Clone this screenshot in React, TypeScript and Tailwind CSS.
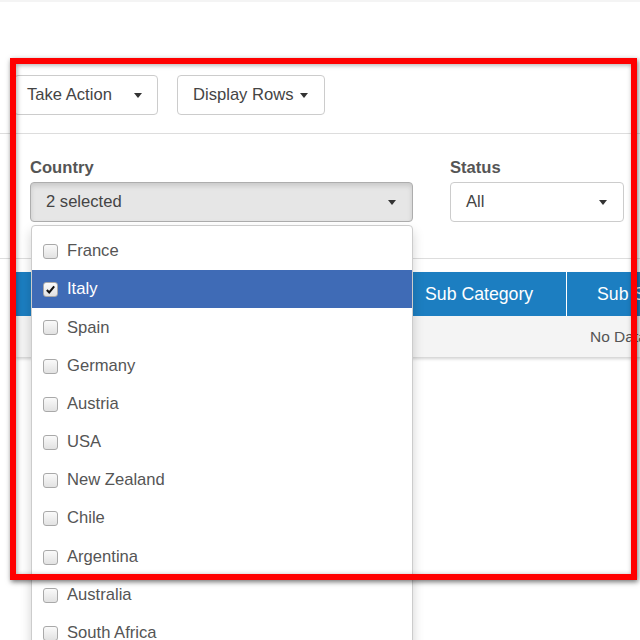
const countries = [
  "France",
  "Italy",
  "Spain",
  "Germany",
  "Austria",
  "USA",
  "New Zealand",
  "Chile",
  "Argentina",
  "Australia",
  "South Africa",
];

function Caret({ color = "border-t-[#333]" }: { color?: string }) {
  return (
    <span
      className={`inline-block w-0 h-0 border-t-[5px] border-x-[4.5px] border-x-transparent ${color}`}
    />
  );
}

function Checkbox({ checked }: { checked?: boolean }) {
  return (
    <span className="flex items-center justify-center w-[15px] h-[15px] rounded-[3px] border border-[#a9a9a9] bg-gradient-to-b from-[#fafafa] to-[#e2e2e2]">
      {checked && (
        <svg viewBox="0 0 12 12" className="w-[11px] h-[11px]">
          <path d="M2 6.5 L4.6 9.2 L10 2.6" fill="none" stroke="#111" strokeWidth="2.2" />
        </svg>
      )}
    </span>
  );
}

export default function App() {
  return (
    <div
      className="relative w-[640px] h-[640px] overflow-hidden bg-white text-[#555]"
      style={{ fontFamily: '"Liberation Sans", Arial, sans-serif' }}
    >
      <div className="h-[2px] bg-[#f4f4f4]" />

      {/* Toolbar */}
      <div className="flex gap-[19px] pl-[14px] pt-[73px] pb-[18px] border-b border-[#ddd]">
        <button className="flex items-center w-[144px] h-[40px] pl-[12px] pr-[15px] justify-between border border-[#ccc] rounded-[4px] bg-white text-[16.6px] text-[#444]">
          <span>Take Action</span>
          <Caret />
        </button>
        <button className="flex items-center gap-[6px] w-[148px] h-[40px] pl-[15px] border border-[#ccc] rounded-[4px] bg-white text-[16.6px] text-[#444]">
          <span>Display Rows</span>
          <Caret />
        </button>
      </div>

      {/* Filters */}
      <div className="flex gap-[37px] pl-[30px] pt-[24px] pb-[36px] border-b border-[#ddd]">
        <div className="flex flex-col w-[383px]">
          <label className="text-[16.6px] leading-[20px] font-bold mb-[4px] text-[#555]">Country</label>
          <div className="flex items-center justify-between h-[40px] pl-[15px] pr-[16px] border border-[#adadad] rounded-[4px] bg-[#e6e6e6] shadow-[inset_0_3px_5px_rgba(0,0,0,0.125)] text-[16.6px] text-[#444]">
            <span>2 selected</span>
            <Caret />
          </div>
        </div>
        <div className="flex flex-col w-[174px]">
          <label className="text-[16.6px] leading-[20px] font-bold mb-[4px] text-[#555]">Status</label>
          <div className="flex items-center justify-between h-[40px] pl-[15px] pr-[16px] border border-[#ccc] rounded-[4px] bg-white text-[16.6px] text-[#444]">
            <span>All</span>
            <Caret />
          </div>
        </div>
      </div>

      {/* Table */}
      <div className="ml-[16px] mt-[13px] w-[700px] shadow-[0_2px_3px_rgba(0,0,0,0.18)]">
        <div className="flex h-[44px] bg-[#1c7ec1] text-white text-[17.7px]">
          <div className="w-[44px] border-r border-white flex items-center justify-center">
            <span className="w-[14px] h-[14px] rounded-[3px] bg-[#ddd]" />
          </div>
          <div className="w-[350px] border-r border-white" />
          <div className="w-[157px] border-r border-white flex items-center pl-[15px] pt-[1px]">Sub Category</div>
          <div className="flex-1 flex items-center pl-[30px] pt-[1px]">Sub Status</div>
        </div>
        <div className="flex items-center h-[41px] bg-[#f4f4f4] text-[15.5px] text-[#555] pl-[574px]">
          No Data Available
        </div>
      </div>

      {/* Dropdown menu */}
      <div className="absolute left-[31px] top-[225px] w-[382px] pt-[6px] bg-white border border-[#ccc] rounded-[4px] shadow-[0_6px_12px_rgba(0,0,0,0.175)]">
        {countries.map((c) => {
          const active = c === "Italy";
          return (
            <div
              key={c}
              className={`flex items-center gap-[9px] h-[38.2px] pl-[11px] pt-[1px] text-[16.6px] ${
                active ? "bg-[#3f6bb6] text-white" : "text-[#555]"
              }`}
            >
              <Checkbox checked={active} />
              <span>{c}</span>
            </div>
          );
        })}
      </div>

      {/* Highlight frame */}
      <div className="absolute left-[10px] top-[58px] w-[627px] h-[522px] border-[6px] border-[#ff0000] shadow-[1px_2px_5px_rgba(0,0,0,0.55),inset_1px_1px_5px_rgba(0,0,0,0.35)] pointer-events-none" />
    </div>
  );
}
